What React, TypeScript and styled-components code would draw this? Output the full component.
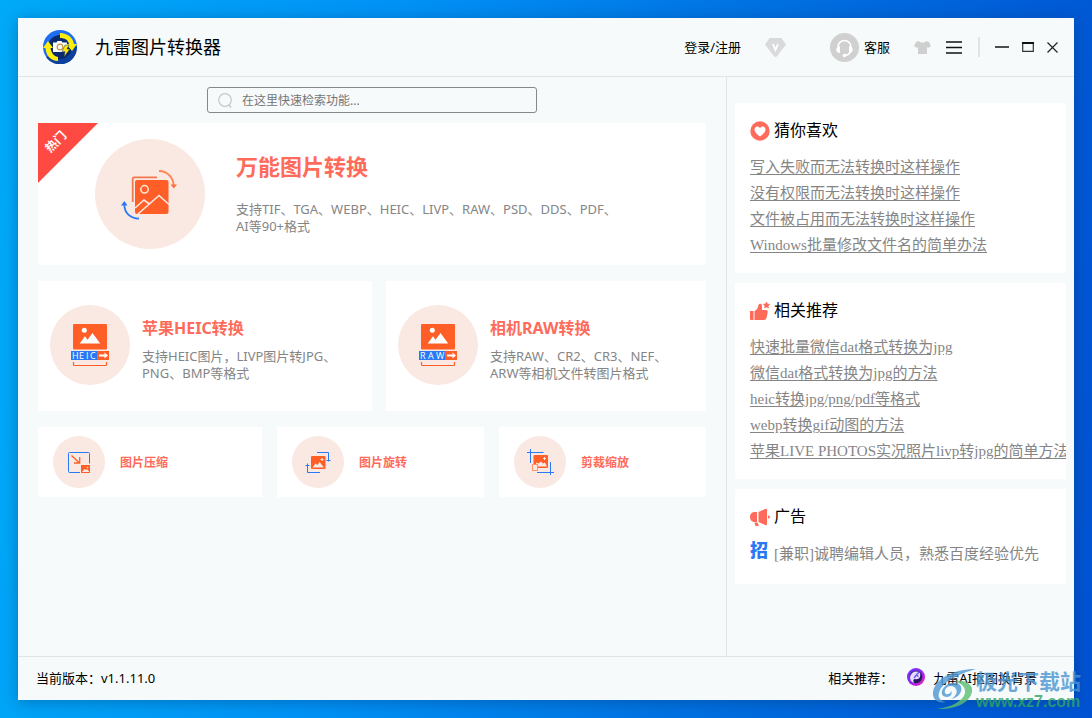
import React from 'react';
import styled, { createGlobalStyle } from 'styled-components';

const accent = '#ff6b5b';
const pale = '#fae8e2';
const orange = '#ff5f26';
const blue = '#2b78f5';
const line = '#e2e4e6';

const ui = '"Noto Sans", "Noto Sans CJK SC", sans-serif';
const song = '"Liberation Serif", "Noto Sans CJK SC", serif';

const GlobalStyle = createGlobalStyle`
  * { box-sizing: border-box; }
  body { margin: 0; font-family: ${ui}; font-size: 13px; color: #000; }
  button { border: 0; padding: 0; background: none; font: inherit; color: inherit; cursor: pointer; }
  a { color: inherit; text-decoration: none; }
  h1, h2, h3, p, ul { margin: 0; padding: 0; }
  ul { list-style: none; }
  svg { display: block; flex: none; }
`;

const Desktop = styled.div`
  position: relative;
  display: flex;
  min-height: 100vh;
  padding: 18px;
  overflow: hidden;
  background: linear-gradient(97deg, #00aaf8 0%, #0092f6 34%, #0072e2 64%, #0052d2 100%);
`;

const AppWindow = styled.div`
  flex: 1;
  min-width: 0;
  display: flex;
  flex-direction: column;
  background: #f6fafb;
  box-shadow: 0 2px 14px rgba(0, 40, 80, 0.35);
`;

const TitleBar = styled.header`
  display: flex;
  align-items: center;
  height: 59px;
  padding: 0 16px 0 25px;
  border-bottom: 1px solid ${line};
`;

const AppName = styled.h1`
  flex: 1;
  margin-left: 18px;
  font-size: 18px;
  font-weight: 400;
  line-height: 26px;
`;

const BarButton = styled.button<{ $gap: number }>`
  display: flex;
  align-items: center;
  gap: 5px;
  margin-left: ${(p) => p.$gap}px;
  line-height: 20px;
  white-space: nowrap;
`;

const Divider = styled.span<{ $gap: number }>`
  width: 2px;
  height: 20px;
  margin-left: ${(p) => p.$gap}px;
  background: ${line};
`;

const Body = styled.div`
  flex: 1;
  display: flex;
`;

const Main = styled.main`
  flex: 1;
  min-width: 0;
  display: flex;
  flex-direction: column;
  gap: 16px;
  padding: 10px 20px 20px;
`;

const SearchBox = styled.label`
  display: flex;
  align-items: center;
  gap: 9px;
  align-self: center;
  width: 330px;
  height: 26px;
  margin-bottom: -6px;
  padding: 1px 10px 0;
  border: 1px solid #85888b;
  border-radius: 3px;
`;

const SearchInput = styled.input`
  flex: 1;
  min-width: 0;
  border: 0;
  padding: 0;
  outline: 0;
  background: none;
  font: 12px/18px ${ui};
  &::placeholder { color: #757575; opacity: 1; }
`;

const Row = styled.div<{ $columns: string; $gap: number }>`
  display: grid;
  grid-template-columns: ${(p) => p.$columns};
  gap: ${(p) => p.$gap}px;
`;

const Card = styled.a<{ $height: number; $inset: number; $gap: number; $lift?: number }>`
  position: relative;
  display: flex;
  align-items: center;
  gap: ${(p) => p.$gap}px;
  min-width: 0;
  height: ${(p) => p.$height}px;
  padding-left: ${(p) => p.$inset}px;
  padding-bottom: ${(p) => p.$lift ?? 0}px;
  background: #fff;
`;

const Disc = styled.span<{ $size: number }>`
  flex: none;
  width: ${(p) => p.$size}px;
  height: ${(p) => p.$size}px;
  border-radius: 50%;
  background: ${pale};
`;

const CardText = styled.div<{ $top?: number }>`
  padding-top: ${(p) => p.$top ?? 0}px;
  white-space: nowrap;
`;

const CardTitle = styled.h2<{ $size: number; $line: number }>`
  color: ${accent};
  font-size: ${(p) => p.$size}px;
  font-weight: 700;
  line-height: ${(p) => p.$line}px;
`;

const ToolTitle = styled(CardTitle)`
  padding-top: 2px;
`;

const CardNote = styled.p<{ $gap: number }>`
  margin-top: ${(p) => p.$gap}px;
  color: #858585;
  line-height: 17px;
`;

const Ribbon = styled.span`
  position: absolute;
  top: 0;
  left: 0;
  width: 60px;
  height: 60px;
  background: #ff4a44;
  clip-path: polygon(0 0, 100% 0, 0 100%);
`;

const RibbonText = styled.span`
  position: absolute;
  top: 10px;
  left: 3px;
  width: 30px;
  color: #fff;
  font-size: 12px;
  font-weight: 700;
  line-height: 18px;
  text-align: center;
  transform: rotate(-45deg);
`;

const Sidebar = styled.aside`
  flex: none;
  width: 348px;
  display: flex;
  flex-direction: column;
  gap: 10px;
  padding: 26px 8px;
  border-left: 1px solid ${line};
`;

const Panel = styled.section`
  padding: 15px 0 15px 15px;
  overflow: hidden;
  background: #fff;
  font-family: ${song};
  white-space: nowrap;
`;

const PanelTitle = styled.h3`
  display: flex;
  align-items: center;
  gap: 4px;
  margin-bottom: 10px;
  font-size: 16px;
  font-weight: 400;
  line-height: 26px;
`;

const PanelLink = styled.a`
  color: #858585;
  font-size: 15px;
  line-height: 26px;
  text-decoration: underline;
  text-underline-offset: 2px;
`;

const LinkItem = styled.li`
  height: 26px;
`;

const AdLink = styled.a`
  display: flex;
  gap: 5px;
  height: 29px;
  color: #858585;
  font-size: 15px;
  line-height: 29px;
`;

const AdBadge = styled.span`
  width: 19px;
  color: ${blue};
  font: 900 18px/20px ${ui};
`;

const StatusBar = styled.footer`
  display: flex;
  align-items: center;
  height: 44px;
  padding: 0 37px 3px 18px;
  border-top: 1px solid ${line};
`;

const Version = styled.span`
  flex: 1;
`;

const Promo = styled.a`
  display: flex;
  align-items: center;
  gap: 8px;
  margin-left: 14px;
`;

const Watermark = styled.div`
  position: absolute;
  right: 12px;
  bottom: 8px;
  display: flex;
  align-items: center;
  pointer-events: none;
  opacity: 0.8;
`;

const WatermarkText = styled.div`
  width: 104px;
  margin-left: -2px;
  color: #4a94d0;
  font-size: 21px;
  font-weight: 700;
  line-height: 26px;
  white-space: nowrap;
`;

const WatermarkSite = styled.div`
  color: #2fa568;
  font: 700 16px/16px "Liberation Sans", sans-serif;
`;

const Logo = () => (
  <svg width="34" height="34" viewBox="0 0 34 34">
    <circle cx="17" cy="17" r="17" fill="#1f6df2" />
    <path d="M3 27A17 17 0 0 0 34 17L25 8 9 25z" fill="#0d3f9e" />
    <circle cx="17" cy="17" r="12" fill="#0a2a70" />
    <path d="M17 3C25 3 30 8 31 14h3l-5 7-6-7h3c-1-4-4-6-9-6z" fill="#ffee0a" />
    <path d="M15 31C8 31 3 26 2.500 18H0l5-7 5 7H7.500c1 5 3 8 7.500 9z" fill="#ffee0a" />
    <path d="M10 12.500h3.500l1-1.500h4l1 1.500H24V22H10z" fill="#fff" />
    <circle cx="17" cy="17" r="2.800" fill="#fff" stroke="#c79645" strokeWidth="1.200" />
    <path d="M22 15h4l-2 4h3l-6 8 1-5.500h-3z" fill="#ffe800" stroke="#0a2a70" strokeWidth=".5" />
  </svg>
);

const Diamond = () => (
  <svg width="21" height="19" viewBox="0 0 21 19">
    <path d="M4.500 0h12L21 6.500 12 18.300q-1.500 1.400-3 0L0 6.500z" fill="#d8dadb" />
    <path d="m8 6 2.500 6L13 6" fill="none" stroke="#fff" strokeWidth="1.800" />
  </svg>
);

const Headset = () => (
  <svg width="29" height="29" viewBox="0 0 29 29">
    <circle cx="14.500" cy="14.500" r="14.500" fill="#d0d0d0" />
    <path d="M8 15v-1a6.500 6.500 0 0 1 13 0v1c0 4-2 7-6 7.500" fill="none" stroke="#fff" strokeWidth="1.600" />
    <path d="M10 13v7c-5 0-5-6.500 0-7zM19 13v7c5 0 5-6.500 0-7z" fill="#fff" />
    <circle cx="14.500" cy="22.500" r="1.800" fill="#fff" />
  </svg>
);

const Shirt = () => (
  <svg width="17" height="13" viewBox="0 0 17 13">
    <path d="M5 0c1 2 6 2 7 0l3 1 2 4-3 2-1-1v7H4V6L3 7 0 5l2-4z" fill="#cfcfcf" />
  </svg>
);

const MenuLines = () => (
  <svg width="16" height="13" viewBox="0 0 16 13">
    <path d="M0 1h16M0 6.500h16M0 12h16" stroke="#111" strokeWidth="1.600" />
  </svg>
);

const Minimize = () => (
  <svg width="14" height="12" viewBox="0 0 14 12">
    <path d="M0 6h14" stroke="#222" strokeWidth="1.600" />
  </svg>
);

const Maximize = () => (
  <svg width="12" height="10" viewBox="0 0 12 10">
    <path d="M.7 1v8.300h10.600V1" fill="none" stroke="#333" strokeWidth="1.200" />
    <path d="M0 1h12" stroke="#111" strokeWidth="2" />
  </svg>
);

const Close = () => (
  <svg width="11" height="11" viewBox="0 0 11 11">
    <path d="m.5.5 10 10m0-10-10 10" stroke="#222" strokeWidth="1.200" />
  </svg>
);

const SearchGlyph = () => (
  <svg width="15" height="16" viewBox="0 0 15 16">
    <circle cx="7" cy="7" r="6.300" fill="none" stroke="#c6c8ca" strokeWidth="1.200" />
    <path d="m11 12 2 2.500" stroke="#c6c8ca" strokeWidth="1.400" />
  </svg>
);

const ConvertArt = () => (
  <svg width="110" height="110" viewBox="0 0 110 110" fill="none">
    <path d="M37.700 63V39.800q0-1.500 1.500-1.500H62" stroke="#f2784f" strokeWidth="1.800" />
    <rect x="40" y="41" width="33.500" height="34" rx="2" fill={orange} />
    <circle cx="49.500" cy="50.300" r="3.700" stroke={pale} strokeWidth="1.500" />
    <path d="m43 75 21-18.500 10 9M40 69l9-8 5.500 4" stroke={pale} strokeWidth="1.600" />
    <path d="M64 32c8 0 14 6 14.700 14" stroke="#ff8456" strokeWidth="1.800" />
    <path d="M75.500 45.500h6.500l-3.200 4z" fill="#ff6f3c" />
    <path d="M44 79.700C35 79.500 29.500 74 29.300 65.500" stroke={blue} strokeWidth="1.800" />
    <path d="M26 66.500h6.500l-3.200-4.500z" fill={blue} />
  </svg>
);

const FormatArt = ({ letters }: { letters: string }) => {
  const positions = letters.length === 4 ? '22 29 36 40' : '22 30 38';
  return (
    <svg width="80" height="80" viewBox="0 0 80 80" fill="none">
      <rect x="23" y="19" width="34" height="25.500" rx="1" fill={orange} />
      <circle cx="34.300" cy="25.300" r="2.500" fill="#fff" />
      <path d="m29.700 38.500 5.300-7.200 2.500 3.400 5-6.700 7.700 10.500z" fill="#fff" />
      <path d="M21 46h26v9H21z" fill={blue} />
      <path d="M47 46h12v9H47z" fill={orange} />
      <text x={positions} y="54" fill="#fff" fontFamily="Open Sans, sans-serif" fontSize="9" fontWeight="400">{letters}</text>
      <path d="M49 50.500h7" stroke="#fff" strokeWidth="2" />
      <path d="m54.500 47.500 3.500 3-3.500 3z" fill="#fff" />
      <path d="M23.500 57v2.500q0 1 1 1h31q1 0 1-1V57" stroke={orange} strokeWidth="1.200" />
    </svg>
  );
};

const CompressArt = () => (
  <svg width="52" height="52" viewBox="0 0 52 52" fill="none">
    <path d="M36.500 27.500v-10q0-1-1-1h-19q-1 0-1 1v18q0 1 1 1H27" stroke={blue} />
    <path d="m18.500 19.500 8 7.500M21 27h5.700v-6" stroke={orange} strokeWidth="1.300" />
    <path d="M28 29h9v8h-9z" fill={orange} />
    <path d="m29 36 2.500-3 1.500 1 1-1 2.500 3z" fill={pale} />
    <circle cx="34.500" cy="31.500" r=".8" fill={pale} />
  </svg>
);

const RotateArt = () => (
  <svg width="52" height="52" viewBox="0 0 52 52" fill="none">
    <path d="M25 16.500h11.500v9M34.500 24.500h4M28 36.500H15.500v-9M13.500 29.500h4" stroke={blue} />
    <rect x="19" y="20" width="14.500" height="13" rx="1" fill={orange} />
    <path d="m20.500 31.500 3-4 2 1.500 2-3 4.500 5.500z" fill={pale} />
    <path d="M30 22v3M28.500 23.500h3" stroke={pale} />
  </svg>
);

const CropArt = () => (
  <svg width="52" height="52" viewBox="0 0 52 52" fill="none">
    <path d="M13 16.500h16.500M16.500 13v14M23 36.500h17M36.500 26v13" stroke={blue} />
    <rect x="19.500" y="19" width="14.500" height="13" rx="1" fill={orange} />
    <path d="m21 30.500 1.500-4 2 1 2.500-2 2 2 2-1 2 4z" fill={pale} />
    <path d="M30.500 21v3M29 22.500h3" stroke={pale} />
    <rect x="18.500" y="28.500" width="5" height="6" fill={pale} stroke="#ff936c" />
  </svg>
);

const HeartBadge = () => (
  <svg width="20" height="20" viewBox="0 0 20 20">
    <circle cx="10" cy="10" r="9.700" fill={accent} />
    <path d="M10 15.500C6.500 13 4.500 11 4.500 8.500c0-3.300 4-4 5.500-1.300 1.500-2.700 5.500-2 5.500 1.300 0 2.500-2 4.500-5.500 7z" fill="#fff" />
  </svg>
);

const ThumbStar = () => (
  <svg width="20" height="20" viewBox="0 0 20 20" fill={accent}>
    <path d="M0 10h3.500v9H1q-1 0-1-1zM4.500 10c2-.5 3.500-3 4-6 .5-2 3.500-1.500 3.500.5V9h4q2 0 1.800 2l-1.300 6q-.5 2-2.500 2H4.500z" />
    <path d="m16.500 1 1 2 2.200.3-1.600 1.600.4 2.200-2-1-2 1 .4-2.200-1.600-1.600 2.200-.3z" stroke={accent} strokeWidth=".6" />
  </svg>
);

const Megaphone = () => (
  <svg width="20" height="20" viewBox="0 0 20 20" fill={accent}>
    <path d="M7 5v10H4.500C-1.500 15-1.500 5 4.500 5zM8.500 5 15 2q2-.8 2 1v14q0 1.800-2 1L8.500 15zM4.500 15.500h3l1.500 3-2 .7q-1.500 0-2-1.500zM18 8.500q2 0 2 1.500t-2 1.500z" />
  </svg>
);

const PromoLogo = () => (
  <svg width="18" height="18" viewBox="0 0 18 18">
    <defs>
      <linearGradient id="promo" x1="0" y1="0" x2="1" y2="1">
        <stop offset="0" stopColor="#5636ff" />
        <stop offset=".55" stopColor="#9a24f0" />
        <stop offset="1" stopColor="#ff1fb0" />
      </linearGradient>
    </defs>
    <circle cx="9" cy="9" r="9" fill="url(#promo)" />
    <circle cx="9" cy="9" r="6.200" fill="#251a60" />
    <path d="M3 9c1-5 6-7 10-4 1 4-1 7-5 6-2 0-2 2-1 4-3-1-4-3-4-6z" fill="#e4ddff" />
    <path d="m7 10 5-6M8 8q3-2 3 1" fill="none" stroke="#6b4df5" strokeWidth="1.200" />
  </svg>
);

const Swirl = () => (
  <svg width="46" height="42" viewBox="0 0 46 42">
    <path d="M44 1C26 1 4 8 1 24c-1 7 5 12 13 10C7 33 5 28 8 22 13 12 30 5 44 1z" fill="#4d97d2" />
    <path d="M10 23c2-7 13-11 18-6 4 5-1 13-9 14 4-2 7-6 5-10-2-4-9-4-11 1-1 3 1 5 3 4 2 0 3-2 3-3 2 3-1 6-4 6-4 0-6-3-5-6z" fill="#4d97d2" />
    <path d="M22 13c14-2 21 5 17 14-4 9-18 15-34 14 15-2 26-8 28-16 1-6-4-10-11-12z" fill="#5cbf73" />
  </svg>
);

const guesses = [
  '写入失败而无法转换时这样操作',
  '没有权限而无法转换时这样操作',
  '文件被占用而无法转换时这样操作',
  'Windows批量修改文件名的简单办法',
];

const related = [
  '快速批量微信dat格式转换为jpg',
  '微信dat格式转换为jpg的方法',
  'heic转换jpg/png/pdf等格式',
  'webp转换gif动图的方法',
  '苹果LIVE PHOTOS实况照片livp转jpg的简单方法',
];

const tools = [
  { name: '图片压缩', art: <CompressArt /> },
  { name: '图片旋转', art: <RotateArt /> },
  { name: '剪裁缩放', art: <CropArt /> },
];

const LinkPanel = ({ title, icon, links }: { title: string; icon: React.ReactNode; links: string[] }) => (
  <Panel>
    <PanelTitle>{icon}{title}</PanelTitle>
    <ul>
      {links.map((text) => (
        <LinkItem key={text}><PanelLink href="#">{text}</PanelLink></LinkItem>
      ))}
    </ul>
  </Panel>
);

export default function App() {
  return (
    <Desktop>
      <GlobalStyle />
      <AppWindow>
        <TitleBar>
          <Logo />
          <AppName>九雷图片转换器</AppName>
          <BarButton $gap={0}>登录/注册</BarButton>
          <BarButton $gap={24} aria-label="VIP"><Diamond /></BarButton>
          <BarButton $gap={44}><Headset />客服</BarButton>
          <BarButton $gap={24} aria-label="换肤"><Shirt /></BarButton>
          <BarButton $gap={15} aria-label="菜单"><MenuLines /></BarButton>
          <Divider $gap={16} />
          <BarButton $gap={15} aria-label="最小化"><Minimize /></BarButton>
          <BarButton $gap={13} aria-label="最大化"><Maximize /></BarButton>
          <BarButton $gap={13} aria-label="关闭"><Close /></BarButton>
        </TitleBar>
        <Body>
          <Main>
            <SearchBox>
              <SearchGlyph />
              <SearchInput type="text" aria-label="搜索" placeholder="在这里快速检索功能..." />
            </SearchBox>
            <Card href="#" $height={142} $inset={57} $gap={31}>
              <Ribbon><RibbonText>热门</RibbonText></Ribbon>
              <Disc $size={110}><ConvertArt /></Disc>
              <CardText>
                <CardTitle $size={22} $line={26}>万能图片转换</CardTitle>
                <CardNote $gap={22}>支持TIF、TGA、WEBP、HEIC、LIVP、RAW、PSD、DDS、PDF、<br />AI等90+格式</CardNote>
              </CardText>
            </Card>
            <Row $columns="334fr 320fr" $gap={14}>
              <Card href="#" $height={130} $inset={12} $gap={12} $lift={2}>
                <Disc $size={80}><FormatArt letters="HEIC" /></Disc>
                <CardText $top={8}>
                  <CardTitle $size={16} $line={24}>苹果HEIC转换</CardTitle>
                  <CardNote $gap={8}>支持HEIC图片，LIVP图片转JPG、<br />PNG、BMP等格式</CardNote>
                </CardText>
              </Card>
              <Card href="#" $height={130} $inset={12} $gap={12} $lift={2}>
                <Disc $size={80}><FormatArt letters="RAW" /></Disc>
                <CardText $top={8}>
                  <CardTitle $size={16} $line={24}>相机RAW转换</CardTitle>
                  <CardNote $gap={8}>支持RAW、CR2、CR3、NEF、<br />ARW等相机文件转图片格式</CardNote>
                </CardText>
              </Card>
            </Row>
            <Row $columns="224fr 207fr 207fr" $gap={15}>
              {tools.map((tool) => (
                <Card key={tool.name} href="#" $height={70} $inset={15} $gap={15}>
                  <Disc $size={52}>{tool.art}</Disc>
                  <ToolTitle $size={12} $line={18}>{tool.name}</ToolTitle>
                </Card>
              ))}
            </Row>
          </Main>
          <Sidebar>
            <LinkPanel title="猜你喜欢" icon={<HeartBadge />} links={guesses} />
            <LinkPanel title="相关推荐" icon={<ThumbStar />} links={related} />
            <Panel>
              <PanelTitle><Megaphone />广告</PanelTitle>
              <AdLink href="#"><AdBadge>招</AdBadge>[兼职]诚聘编辑人员，熟悉百度经验优先</AdLink>
            </Panel>
          </Sidebar>
        </Body>
        <StatusBar>
          <Version>当前版本：v1.1.11.0</Version>
          <span>相关推荐：</span>
          <Promo href="#"><PromoLogo />九雷AI抠图换背景</Promo>
        </StatusBar>
      </AppWindow>
      <Watermark>
        <Swirl />
        <WatermarkText>
          极光下载站
          <WatermarkSite>www.xz7.com</WatermarkSite>
        </WatermarkText>
      </Watermark>
    </Desktop>
  );
}
